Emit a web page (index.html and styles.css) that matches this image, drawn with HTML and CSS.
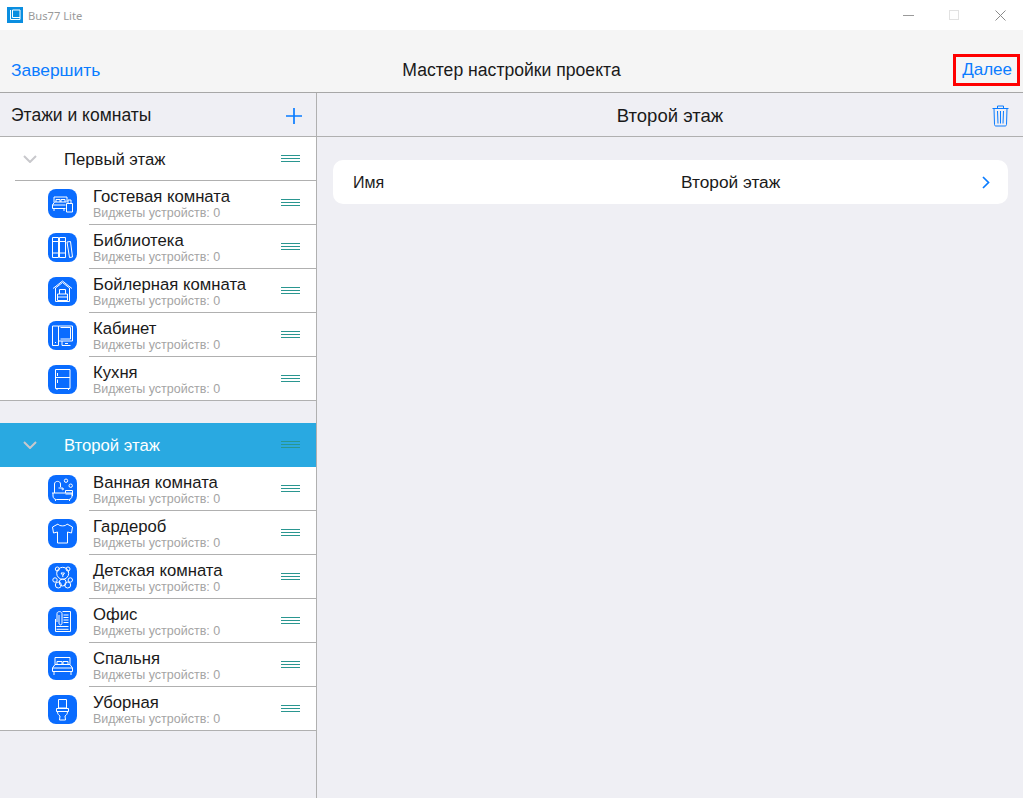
FILE: index.html
```html
<!DOCTYPE html>
<html lang="ru">
<head>
<meta charset="utf-8">
<title>Bus77 Lite</title>
<link rel="stylesheet" href="styles.css">
</head>
<body>
<div class="app">
  <div class="titlebar">
    <svg class="app-logo" viewBox="0 0 16 16"><rect width="16" height="16" fill="#0a8ee0"/><path d="M3.500 3v9.500h9.500V3H5.500v7.500H13" fill="none" stroke="#fff" stroke-width="1"/></svg>
    <span class="app-name">Bus77 Lite</span>
    <div class="win-controls">
      <svg viewBox="0 0 11 11"><path d="M0 5.500h11" stroke="#9a9a9a" fill="none"/></svg>
      <svg viewBox="0 0 11 11"><rect x=".5" y=".5" width="9" height="9" stroke="#e2e2e2" fill="none"/></svg>
      <svg viewBox="0 0 11 11"><path d="M.5.500l10 10M10.500.500l-10 10" stroke="#8a8a8a" fill="none"/></svg>
    </div>
  </div>
  <header class="topbar">
    <a class="link">Завершить</a>
    <h1 class="top-title">Мастер настройки проекта</h1>
    <a class="link next">Далее</a>
  </header>
  <main class="columns">
    <aside class="sidebar">
      <div class="side-head">
        <span>Этажи и комнаты</span>
        <svg class="plus" viewBox="0 0 16 16"><path d="M8 0v16M0 8h16" stroke="#0a7cff" stroke-width="1.700" fill="none"/></svg>
      </div>

      <section class="group">
        <div class="floor">
          <svg class="chev" viewBox="0 0 14 8"><path d="M1 1l6 6 6-6" fill="none" stroke="#c8c8cc" stroke-width="2"/></svg>
          <span class="floor-name">Первый этаж</span>
          <svg class="grip" viewBox="0 0 19 7"><path d="M0 .5h19M0 3.500h19M0 6.500h19" stroke="#2a9690"/></svg>
        </div>
        <div class="room">
          <div class="tile"><svg viewBox="0 0 29 29"><path d="M6 13V8h13v5M8 13v-2.500h4V13M13 13v-2.500h4V13M4.500 19.500V16l2-3h12M4.500 16h13M4.500 19.500h13M6 19.500V22M16 19.500V22M18.500 14.500h6V23h-6zM20 14.500V11h3v3.500"/></svg></div>
          <div class="room-text"><div class="room-name">Гостевая комната</div><div class="room-sub">Виджеты устройств: 0</div></div>
          <svg class="grip" viewBox="0 0 19 7"><path d="M0 .5h19M0 3.500h19M0 6.500h19" stroke="#2a9690"/></svg>
        </div>
        <div class="room">
          <div class="tile"><svg viewBox="0 0 29 29"><path d="M4.500 4.500h6v20h-6zM11.500 4.500h6v20h-6zM4.500 8.500h6M11.500 8.500h6M4.500 20h6M11.500 20h6M19 9l3.500-.5 2 15.500-3 .5z"/></svg></div>
          <div class="room-text"><div class="room-name">Библиотека</div><div class="room-sub">Виджеты устройств: 0</div></div>
          <svg class="grip" viewBox="0 0 19 7"><path d="M0 .5h19M0 3.500h19M0 6.500h19" stroke="#2a9690"/></svg>
        </div>
        <div class="room">
          <div class="tile"><svg viewBox="0 0 29 29"><path d="M5 11.500L14.500 4l9.500 7.500M7.500 11l7-5.500 7 5.500M7.500 11v13.500h14V11M9.500 17h10v6.500h-10zM9.500 20h10M11.500 17v-4.500h6V17"/></svg></div>
          <div class="room-text"><div class="room-name">Бойлерная комната</div><div class="room-sub">Виджеты устройств: 0</div></div>
          <svg class="grip" viewBox="0 0 19 7"><path d="M0 .5h19M0 3.500h19M0 6.500h19" stroke="#2a9690"/></svg>
        </div>
        <div class="room">
          <div class="tile"><svg viewBox="0 0 29 29"><path d="M4.500 5h6v19.500h-6zM10.500 5h14v15h-14M12.500 6.500h10v11.500h-10M14 20v4.500h8.500M17 22.500h3M7 21.500h1"/></svg></div>
          <div class="room-text"><div class="room-name">Кабинет</div><div class="room-sub">Виджеты устройств: 0</div></div>
          <svg class="grip" viewBox="0 0 19 7"><path d="M0 .5h19M0 3.500h19M0 6.500h19" stroke="#2a9690"/></svg>
        </div>
        <div class="room">
          <div class="tile"><svg viewBox="0 0 29 29"><path d="M7.500 4.500h14.500v19H7.500zM7.500 12.500h14.500M9.500 8v3M9.500 14.500v3.500M9 23.500V25M20.500 23.500V25"/></svg></div>
          <div class="room-text"><div class="room-name">Кухня</div><div class="room-sub">Виджеты устройств: 0</div></div>
          <svg class="grip" viewBox="0 0 19 7"><path d="M0 .5h19M0 3.500h19M0 6.500h19" stroke="#2a9690"/></svg>
        </div>
      </section>

      <section class="group second">
        <div class="floor active">
          <svg class="chev" viewBox="0 0 14 8"><path d="M1 1l6 6 6-6" fill="none" stroke="#c8c8cc" stroke-width="2"/></svg>
          <span class="floor-name">Второй этаж</span>
          <svg class="grip" viewBox="0 0 19 7"><path d="M0 .5h19M0 3.500h19M0 6.500h19" stroke="#2a9690"/></svg>
        </div>
        <div class="room">
          <div class="tile"><svg viewBox="0 0 29 29"><path d="M4 18h21M5 18v3c0 2 1.500 3.500 3.500 3.500h12c2 0 3.500-1.500 3.500-3.500v-3M7.500 24.500V26M21.500 24.500V26M6.500 18V9c0-3.500 6-3.500 6 0v3M10.500 13h4M17.500 18v-2.500h7V21M17.500 19h7"/><circle cx="18" cy="5.700" r="1.700"/><circle cx="22.700" cy="10.700" r="1.700"/><circle cx="14.700" cy="14" r=".8"/></svg></div>
          <div class="room-text"><div class="room-name">Ванная комната</div><div class="room-sub">Виджеты устройств: 0</div></div>
          <svg class="grip" viewBox="0 0 19 7"><path d="M0 .5h19M0 3.500h19M0 6.500h19" stroke="#2a9690"/></svg>
        </div>
        <div class="room">
          <div class="tile"><svg viewBox="0 0 29 29"><path d="M10 5L4.500 8l1 6 4-1v11h10V13l4 1 1-6L19 5c-1 2.500-8 2.500-9 0z"/></svg></div>
          <div class="room-text"><div class="room-name">Гардероб</div><div class="room-sub">Виджеты устройств: 0</div></div>
          <svg class="grip" viewBox="0 0 19 7"><path d="M0 .5h19M0 3.500h19M0 6.500h19" stroke="#2a9690"/></svg>
        </div>
        <div class="room">
          <div class="tile"><svg viewBox="0 0 29 29"><circle cx="14.700" cy="10.300" r="6"/><circle cx="9.300" cy="6" r="2"/><circle cx="20" cy="6" r="2"/><circle cx="14.700" cy="19.500" r="3.500"/><circle cx="10.300" cy="22" r="3"/><circle cx="19.700" cy="22" r="3"/><circle cx="7" cy="17" r="2.200"/><circle cx="22.300" cy="17" r="2.200"/><path d="M13 10h3.500l-1.700 2.500zM14.800 12.500V14"/></svg></div>
          <div class="room-text"><div class="room-name">Детская комната</div><div class="room-sub">Виджеты устройств: 0</div></div>
          <svg class="grip" viewBox="0 0 19 7"><path d="M0 .5h19M0 3.500h19M0 6.500h19" stroke="#2a9690"/></svg>
        </div>
        <div class="room">
          <div class="tile"><svg viewBox="0 0 29 29"><path d="M7.500 12v12.500h15V4.500h-8M15.500 8h5M15.500 10.500h5M15.500 13h5M15.500 15.500h5M8.500 19.500h12M8.500 22.300h12M9 15V6.500c0-2.500 5-2.500 5 0V16c0 2.500-3 2.500-3 0V8"/></svg></div>
          <div class="room-text"><div class="room-name">Офис</div><div class="room-sub">Виджеты устройств: 0</div></div>
          <svg class="grip" viewBox="0 0 19 7"><path d="M0 .5h19M0 3.500h19M0 6.500h19" stroke="#2a9690"/></svg>
        </div>
        <div class="room">
          <div class="tile"><svg viewBox="0 0 29 29"><path d="M7 13.500V6.500h15v7M4.500 20.500V17l2.500-3.500h15l2.500 3.500v3.500zM4.500 17h20M6 20.500V24M23 20.500V24M9 13.500V10.500h5v3M15 13.500V10.500h5v3"/></svg></div>
          <div class="room-text"><div class="room-name">Спальня</div><div class="room-sub">Виджеты устройств: 0</div></div>
          <svg class="grip" viewBox="0 0 19 7"><path d="M0 .5h19M0 3.500h19M0 6.500h19" stroke="#2a9690"/></svg>
        </div>
        <div class="room">
          <div class="tile"><svg viewBox="0 0 29 29"><path d="M10.500 4.500h8V13h-8zM8.500 13.500h12v3h-12zM9.500 16.500c0 2.500 1 3.500 2.500 4.500l-.5 4h6l-.5-4c1.500-1 2.500-2 2.500-4.500"/></svg></div>
          <div class="room-text"><div class="room-name">Уборная</div><div class="room-sub">Виджеты устройств: 0</div></div>
          <svg class="grip" viewBox="0 0 19 7"><path d="M0 .5h19M0 3.500h19M0 6.500h19" stroke="#2a9690"/></svg>
        </div>
      </section>
    </aside>

    <section class="detail">
      <div class="detail-head">
        <span>Второй этаж</span>
        <svg class="trash" viewBox="0 0 17 22"><path d="M.5 3.500h16M5.500 3.500V1h6v2.500M2 3.500l.5 16c0 1 .6 1.500 1.500 1.500h9c.9 0 1.500-.5 1.500-1.500l.5-16M5.500 6l.5 12.500M8.500 6v12.500M11.500 6L11 18.500" fill="none" stroke="#0a7cff"/></svg>
      </div>
      <div class="card">
        <span class="card-label">Имя</span>
        <span class="card-value">Второй этаж</span>
        <svg class="card-chev" viewBox="0 0 8 13"><path d="M1 1l5.500 5.500L1 12" fill="none" stroke="#0a7cff" stroke-width="1.700"/></svg>
      </div>
    </section>
  </main>
</div>
</body>
</html>
```
FILE: styles.css
```css
*, *::before, *::after { box-sizing: border-box; }
html, body { margin: 0; height: 100%; }
body {
  font-family: "Liberation Sans", Arial, sans-serif;
  color: #1a1a1a;
  background: #efeff4;
  overflow: hidden;
}
.app { width: 1023px; height: 798px; display: flex; flex-direction: column; }

.titlebar {
  height: 30px;
  flex: none;
  background: #fff;
  display: flex;
  align-items: center;
  padding-left: 7px;
}
.app-logo { width: 16px; height: 16px; display: block; margin-right: 5px; }
.app-name { font: 11.2px "Noto Sans", sans-serif; color: #9a9a9a; }
.win-controls { margin-left: auto; display: flex; gap: 35px; padding-right: 17px; }
.win-controls svg { width: 11px; height: 11px; display: block; }

.topbar {
  height: 63px;
  flex: none;
  background: #f5f5f5;
  border-bottom: 1px solid #a7a7a7;
  display: grid;
  grid-template-columns: 1fr auto 1fr;
  align-items: end;
  padding: 0 11px 12px;
}
.link { font-size: 17.4px; line-height: 20px; color: #0a7cff; }
.top-title {
  margin: 0;
  font-size: 17.6px;
  font-weight: normal;
  line-height: 20px;
  text-align: center;
}
.next { position: relative; justify-self: end; font-size: 17px; }
.next::after {
  content: "";
  position: absolute;
  left: -9px;
  top: -6px;
  width: 67px;
  height: 32px;
  border: 3px solid #f00;
}

.columns { flex: 1; display: flex; min-height: 0; }
.sidebar { width: 317px; flex: none; border-right: 1px solid #b0b0b0; }
.side-head {
  height: 44px;
  display: flex;
  align-items: center;
  justify-content: space-between;
  padding: 2px 14px 0 11px;
  font-size: 17.5px;
  border-bottom: 1px solid #b0b0b0;
}
.plus { width: 16px; height: 16px; display: block; }

.group { background: #fff; }
.second { margin-top: 22px; }
.floor {
  height: 44px;
  display: flex;
  align-items: center;
  padding-left: 23px;
  padding-right: 16px;
  position: relative;
}
.floor::after {
  content: "";
  position: absolute;
  left: 15px;
  right: 0;
  bottom: 0;
  height: 1px;
  background: #b0b0b0;
}
.floor.active { background: #29a9e1; color: #fff; }
.floor.active::after { display: none; }
.chev { width: 14px; height: 8px; display: block; }
.floor-name { margin-left: 27px; padding-top: 1px; font-size: 16.7px; flex: 1; }
.grip { width: 19px; height: 7px; display: block; flex: none; margin-bottom: 2px; }

.room {
  height: 44px;
  display: flex;
  align-items: flex-start;
  padding: 8px 16px 0 48px;
  position: relative;
}
.room::after {
  content: "";
  position: absolute;
  left: 89px;
  right: 0;
  bottom: 0;
  height: 1px;
  background: #b0b0b0;
}
.room:last-child::after { left: 0; }
.room .grip { margin: 10px 0 0; }
.tile {
  width: 29px;
  height: 29px;
  flex: none;
  background: #0a6cff;
  border-radius: 8px;
}
.tile svg {
  width: 29px;
  height: 29px;
  display: block;
  fill: none;
  stroke: #fff;
  stroke-width: 1;
}
.room-text { flex: 1; margin: -1px 0 0 16px; }
.room-name { font-size: 16.7px; line-height: 18px; }
.room-sub { font-size: 12.5px; line-height: 14px; color: #a4a4a4; }

.detail { flex: 1; min-width: 0; }
.detail-head {
  height: 44px;
  display: flex;
  align-items: center;
  justify-content: center;
  padding-top: 2px;
  font-size: 18.5px;
  border-bottom: 1px solid #b0b0b0;
  position: relative;
}
.trash { position: absolute; right: 14px; top: 12px; width: 17px; height: 22px; display: block; }
.card {
  margin: 23px 15px 0 16px;
  height: 44px;
  background: #fff;
  border-radius: 10px;
  display: flex;
  align-items: center;
  padding: 1px 18px 0 20px;
}
.card-label { flex: 0 0 328px; font-size: 16px; }
.card-value { flex: 1; font-size: 17.3px; }
.card-chev { width: 8px; height: 13px; display: block; flex: none; margin-top: -1px; }
```
